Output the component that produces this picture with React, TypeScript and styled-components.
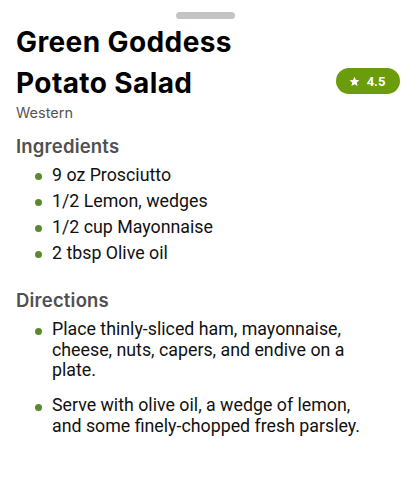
import React from "react";
import styled, { createGlobalStyle } from "styled-components";

const GlobalStyle = createGlobalStyle`
  html, body { margin: 0; padding: 0; background: #ffffff; }
  body { font-family: Roboto, "Liberation Sans", sans-serif; }
  * { box-sizing: border-box; }
`;

const Sheet = styled.div`
  width: 411px;
  min-height: 478px;
  background: #ffffff;
  padding: 12px 11px 0 16px;
  display: flex;
  flex-direction: column;
`;

const Handle = styled.div`
  align-self: center;
  width: 59px;
  height: 7px;
  border-radius: 4px;
  background: #c4c4c4;
  margin-left: -5px;
`;

const Header = styled.div`
  display: flex;
  align-items: flex-end;
  justify-content: space-between;
  margin-top: 3px;
`;

const Title = styled.h1`
  margin: 0;
  font-family: Inter, "Open Sans", sans-serif;
  font-weight: 700;
  font-size: 28px;
  line-height: 41px;
  color: #000000;
  letter-spacing: 0.4px;
`;

const Badge = styled.div`
  display: flex;
  align-items: center;
  justify-content: center;
  gap: 7px;
  width: 64px;
  height: 26px;
  border-radius: 13px;
  background: #6a9c0c;
  color: #ffffff;
  font-family: Roboto, sans-serif;
  font-weight: 700;
  font-size: 13px;
  margin-bottom: 10px;
  padding-right: 2px;
`;

const Cuisine = styled.div`
  font-family: Inter, "Open Sans", sans-serif;
  font-size: 14.5px;
  line-height: 16px;
  color: #555555;
  margin-top: 0.5px;
`;

const SectionTitle = styled.h2<{ $top: number }>`
  margin: ${(p) => p.$top}px 0 0 0;
  font-family: Inter, "Open Sans", sans-serif;
  font-weight: 600;
  font-size: 18.5px;
  line-height: 24px;
  letter-spacing: 0.2px;
  color: #505050;
`;

const List = styled.ul<{ $gap: number }>`
  list-style: none;
  margin: 7px 0 0 0;
  padding: 0 32px 0 19px;
  display: flex;
  flex-direction: column;
  gap: ${(p) => p.$gap}px;
`;

const Item = styled.li`
  display: flex;
  align-items: flex-start;
  gap: 10px;
`;

const Dot = styled.span`
  flex: none;
  width: 7px;
  height: 7px;
  border-radius: 50%;
  background: #5b8a2e;
  margin-top: 8.5px;
`;

const ItemText = styled.span`
  font-family: Roboto, sans-serif;
  font-size: 17.8px;
  line-height: 20.5px;
  color: #111111;
`;

const Star = () => (
  <svg width="11" height="11" viewBox="0 0 24 24" fill="#ffffff" aria-hidden>
    <path d="M12 1.5l3.1 7.1 7.7.7-5.8 5.1 1.7 7.6L12 18l-6.7 4 1.7-7.6L1.2 9.3l7.7-.7z" />
  </svg>
);

const ingredients = [
  "9 oz Prosciutto",
  "1/2 Lemon, wedges",
  "1/2 cup Mayonnaise",
  "2 tbsp Olive oil",
];

const directions = [
  "Place thinly-sliced ham, mayonnaise, cheese, nuts, capers, and endive on a plate.",
  "Serve with olive oil, a wedge of lemon, and some finely-chopped fresh parsley.",
];

export default function App() {
  return (
    <>
      <GlobalStyle />
      <Sheet>
        <Handle />
        <Header>
          <Title>
            Green Goddess
            <br />
            Potato Salad
          </Title>
          <Badge>
            <Star />
            <span>4.5</span>
          </Badge>
        </Header>
        <Cuisine>Western</Cuisine>
        <SectionTitle $top={13}>Ingredients</SectionTitle>
        <List $gap={5.6}>
          {ingredients.map((t) => (
            <Item key={t}>
              <Dot />
              <ItemText>{t}</ItemText>
            </Item>
          ))}
        </List>
        <SectionTitle $top={25}>Directions</SectionTitle>
        <List $gap={14.5}>
          {directions.map((t) => (
            <Item key={t}>
              <Dot />
              <ItemText>{t}</ItemText>
            </Item>
          ))}
        </List>
      </Sheet>
    </>
  );
}
